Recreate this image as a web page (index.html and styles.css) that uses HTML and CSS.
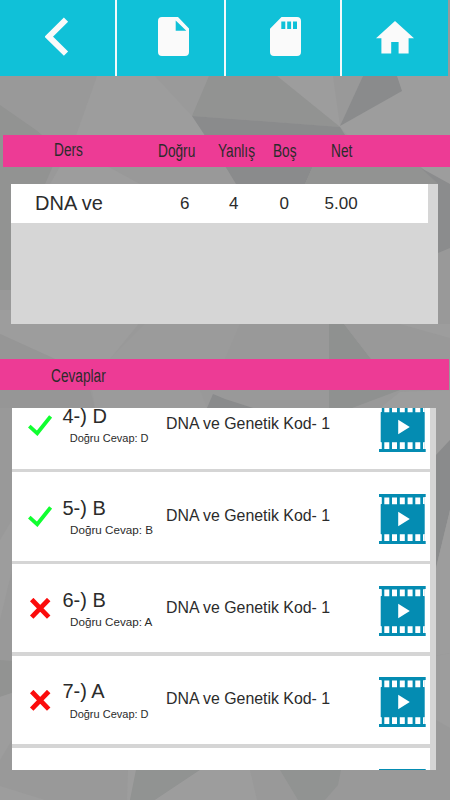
FILE: index.html
```html
<!DOCTYPE html>
<html lang="tr">
<head>
<meta charset="utf-8">
<title>Cevaplar</title>
<link rel="stylesheet" href="styles.css">
</head>
<body>
<svg class="backdrop" viewBox="0 0 450 800" aria-hidden="true">
  <rect width="450" height="800" fill="#999"/>
  <path fill="#9d9d9d" d="M97 76H209L192 116L230 135L140 135L60 183L78 130Z"/>
  <path fill="#9a9a9a" d="M155 76H209L192 116Z"/>
  <path fill="#929392" d="M0 105L36 130L60 150L45 184H11V290H0Z"/>
  <path fill="#9d9d9d" d="M78 135H225L236 184H50Z"/>
  <path fill="#999" d="M107 166L140 184H236L225 166Z"/>
  <path fill="#9d9d9d" d="M277 76H450V184H420L375 166L340 127Z"/>
  <path fill="#999" d="M333 76H363L340 126Z"/>
  <path fill="#929392" d="M209 76H277L340 127L192 116Z"/>
  <path fill="#8a8b8c" d="M192 116L340 127L345 135L313 166L305 184H236L225 166Z"/>
  <path fill="#929392" d="M340 135L382 166L305 184L313 166Z"/>
  <path fill="#929392" d="M313 166H421L438 176V184H305Z"/>
  <path fill="#9d9d9d" d="M420 166H450V184H438Z"/>
  <path fill="#8a8b8c" d="M363 76H397L402 91L340 126Z"/>
  <path fill="#8b8c8d" d="M421 168L450 184V248L438 253V184Z"/>
  <path fill="#9d9d9d" d="M0 310H150L110 359H55L0 334Z"/>
  <path fill="#969696" d="M0 334L55 359L90 390L95 408H0Z"/>
  <path fill="#9b9b9b" d="M145 324H240L225 359H110ZM92 390H200L207 408H95Z"/>
  <path fill="#8f9190" d="M329 324H344L371 359L400 390L352 408H329Z"/>
  <path fill="#999" d="M344 324H400V359H371Z"/>
  <path fill="#9d9d9d" d="M400 324H450V338ZM400 392L450 390V440L436 455V408H380Z"/>
  <path fill="#8a8b8c" d="M213 394L207 408H253L225 399Z"/>
  <path fill="#8a8b8c" d="M450 440L436 455V568L450 510Z"/>
  <path fill="#9d9d9d" d="M450 510L436 568V656L450 653Z"/>
  <path fill="#9d9d9d" d="M0 540L12 520V570L0 620Z"/>
  <path fill="#929392" d="M0 660L12 661V693L0 697Z"/>
  <path fill="#9d9d9d" d="M0 697L12 693V740L0 760ZM0 786L45 800H0ZM128 770H136L130 800H127Z"/>
  <path fill="#919392" d="M136 770H200L155 800H130Z"/>
  <path fill="#9d9d9d" d="M200 770H250L257 800H155Z"/>
  <path fill="#919392" d="M280 770H341L338 785L325 800H298Z"/>
  <path fill="#9d9d9d" d="M436 656L450 653V728L436 720Z"/>
</svg>

<svg class="symbols" aria-hidden="true">
  <symbol id="check" viewBox="0 0 24 21"><path d="M1.3 11.2L9.2 18.3L22.6 1.4" fill="none" stroke="#10ff30" stroke-width="3.8"/></symbol>
  <symbol id="cross" viewBox="0 0 24 21"><path d="M3.7 1.5L20.7 19.1M20.7 1.5L3.7 19.1" fill="none" stroke="#fb0c0c" stroke-width="4.8"/></symbol>
  <symbol id="film" viewBox="0 0 47 50">
    <path fill="#048cb2" d="M0 0H46.7V3H45.3V10.3H45.7V40H45.3V47H46.7V50H0V47H2V40H1.7V10.3H2V3H0Z"/>
    <path fill="#fff" d="M5.3 3.4h5v6.9h-5zM13 3.4h5v6.9h-5zM20.8 3.4h5v6.9h-5zM28.6 3.4h5v6.9h-5zM36.3 3.4h5v6.9h-5zM1.5 3.2h1.3v6.9h-1.3zM44 3.2h1.5v6.9h-1.5z"/>
    <path fill="#fff" d="M5.3 40.2h5v6.7h-5zM13 40.2h5v6.7h-5zM20.8 40.2h5v6.7h-5zM28.6 40.2h5v6.7h-5zM36.3 40.2h5v6.7h-5zM1.5 40.2h1.3v6.7h-1.3zM44 40.2h1.5v6.7h-1.5zM19.2 17.8L30.8 25L19.2 32.2Z"/>
  </symbol>
</svg>

<div class="screen">
  <nav class="toolbar">
    <a class="tool"><svg width="24" height="39" viewBox="0 0 24 39"><path d="M21 2.7L3.8 19.7L21 36.7" fill="none" stroke="#fafafa" stroke-width="6"/></svg></a>
    <a class="tool"><svg width="31" height="39" viewBox="0 0 31 39"><path fill="#fafafa" fill-rule="evenodd" d="M4 0H20L31 11.5V35Q31 39 27 39H4Q0 39 0 35V4Q0 0 4 0ZM17.7 3.6V13.8H28.3Z"/></svg></a>
    <a class="tool"><svg width="31" height="39" viewBox="0 0 31 39"><path fill="#fafafa" fill-rule="evenodd" d="M11.5 0H27Q31 0 31 4V35Q31 39 27 39H4Q0 39 0 35V11.8ZM11.3 4.6V12H15.3V4.6ZM17.2 4.6V12H21.1V4.6ZM23 4.6V12H27V4.6Z"/></svg></a>
    <a class="tool"><svg width="38" height="33" viewBox="0 0 38 33"><path fill="#fafafa" d="M19 0L38 17.2H32.6V32.6H22.6V21H15.2V32.6H5.4V17.2H0Z"/></svg></a>
  </nav>

  <header class="bar results-bar">
    <span class="high">Ders</span><span>Doğru</span><span>Yanlış</span><span>Boş</span><span>Net</span>
  </header>
  <section class="results">
    <div class="result">
      <span class="lesson">DNA ve</span><span>6</span><span>4</span><span>0</span><span>5.00</span>
    </div>
  </section>

  <header class="bar answers-bar"><span>Cevaplar</span></header>
  <section class="answers">
    <ul class="list">
      <li class="answer">
        <svg class="mark"><use href="#check"/></svg>
        <div class="choice"><p class="given">4-) D</p><p class="correct">Doğru Cevap: D</p></div>
        <p class="topic">DNA ve Genetik Kod- 1</p>
        <svg class="film"><use href="#film"/></svg>
      </li>
      <li class="answer">
        <svg class="mark"><use href="#check"/></svg>
        <div class="choice"><p class="given">5-) B</p><p class="correct wide">Doğru Cevap: B</p></div>
        <p class="topic">DNA ve Genetik Kod- 1</p>
        <svg class="film"><use href="#film"/></svg>
      </li>
      <li class="answer">
        <svg class="mark"><use href="#cross"/></svg>
        <div class="choice"><p class="given">6-) B</p><p class="correct wide">Doğru Cevap: A</p></div>
        <p class="topic">DNA ve Genetik Kod- 1</p>
        <svg class="film"><use href="#film"/></svg>
      </li>
      <li class="answer">
        <svg class="mark"><use href="#cross"/></svg>
        <div class="choice"><p class="given">7-) A</p><p class="correct">Doğru Cevap: D</p></div>
        <p class="topic">DNA ve Genetik Kod- 1</p>
        <svg class="film"><use href="#film"/></svg>
      </li>
      <li class="answer last">
        <svg class="film"><use href="#film"/></svg>
      </li>
    </ul>
  </section>
</div>
</body>
</html>
```
FILE: styles.css
```css
* { box-sizing: border-box; }

body {
  margin: 0;
  background: #999;
  color: #2b2b2b;
  font-family: "Liberation Sans", Arial, sans-serif;
}

p, ul { margin: 0; padding: 0; }

.backdrop {
  position: absolute;
  inset: 0;
  width: 450px;
  height: 800px;
}

.symbols { position: absolute; width: 0; height: 0; }

.screen {
  position: relative;
  width: 450px;
  height: 800px;
  overflow: hidden;
  display: flex;
  flex-direction: column;
}

.toolbar {
  width: 448px;
  height: 76px;
  flex: none;
  display: grid;
  grid-template-columns: 116.5px 109.5px 115.5px 106.5px;
  background: #10c1d8;
}

.tool {
  padding-top: 17px;
  border-right: 2.5px solid #f2fafb;
}
.tool:nth-child(2) { border-right-width: 2px; }
.tool:last-child { border-right: 0; padding-top: 21px; }
.tool svg { display: block; }
.tool:nth-child(1) svg { margin-left: 45px; }
.tool:nth-child(2) svg { margin-left: 41px; }
.tool:nth-child(3) svg { margin-left: 44px; }
.tool:nth-child(4) svg { margin-left: 34.5px; }

.bar {
  flex: none;
  background: #ed3b95;
  font-size: 18px;
  line-height: 33px;
  white-space: nowrap;
}
.bar span {
  display: block;
  transform: scaleX(.76);
  transform-origin: left;
}

.results-bar {
  height: 31.5px;
  margin: 59px 0 0 3px;
  padding-left: 51px;
  display: grid;
  grid-template-columns: 104px 60px 54.5px 58px 60px;
}
.results-bar .high { line-height: 31px; }

.results {
  flex: none;
  width: 427.5px;
  height: 140px;
  margin: 17px 0 0 10.5px;
  background: #d6d6d6;
}

.result {
  width: 417.5px;
  height: 39px;
  padding-left: 24.5px;
  display: grid;
  grid-template-columns: 145px 49px 50.5px 45px 60px;
  background: #fff;
  font-size: 17px;
  line-height: 39px;
}
.lesson { font-size: 20px; line-height: 38px; }

.answers-bar {
  width: 448.7px;
  height: 31.3px;
  margin-top: 35.5px;
  padding-left: 51px;
  line-height: 35px;
}

.answers {
  flex: none;
  width: 424px;
  height: 362px;
  margin: 17.7px 0 0 12px;
  overflow: hidden;
  background: #d5d5d5;
}

.list {
  width: 418px;
  margin-top: -27.5px;
  display: flex;
  flex-direction: column;
  gap: 3.4px;
  list-style: none;
}

.answer {
  height: 88.4px;
  display: grid;
  grid-template-columns: 34px 104px 213.3px 47px;
  padding-left: 16px;
  background: #fff;
}
.answer.last .film { grid-column: 4; }

.mark { width: 24px; height: 21px; margin-top: 34.2px; }
.choice { padding: 23.5px 0 0 .4px; white-space: nowrap; }
.given { font-size: 20px; line-height: 24px; }
.correct {
  margin: 3.5px 0 0 7.3px;
  font-size: 11px;
  line-height: 14px;
}
.correct.wide { transform: scaleX(1.06); transform-origin: left; }
.topic {
  margin-top: 33.6px;
  font-size: 16px;
  line-height: 20px;
  white-space: nowrap;
  transform: scaleX(.992);
  transform-origin: left;
}
.film { width: 47px; height: 50px; margin-top: 21.6px; }
```
